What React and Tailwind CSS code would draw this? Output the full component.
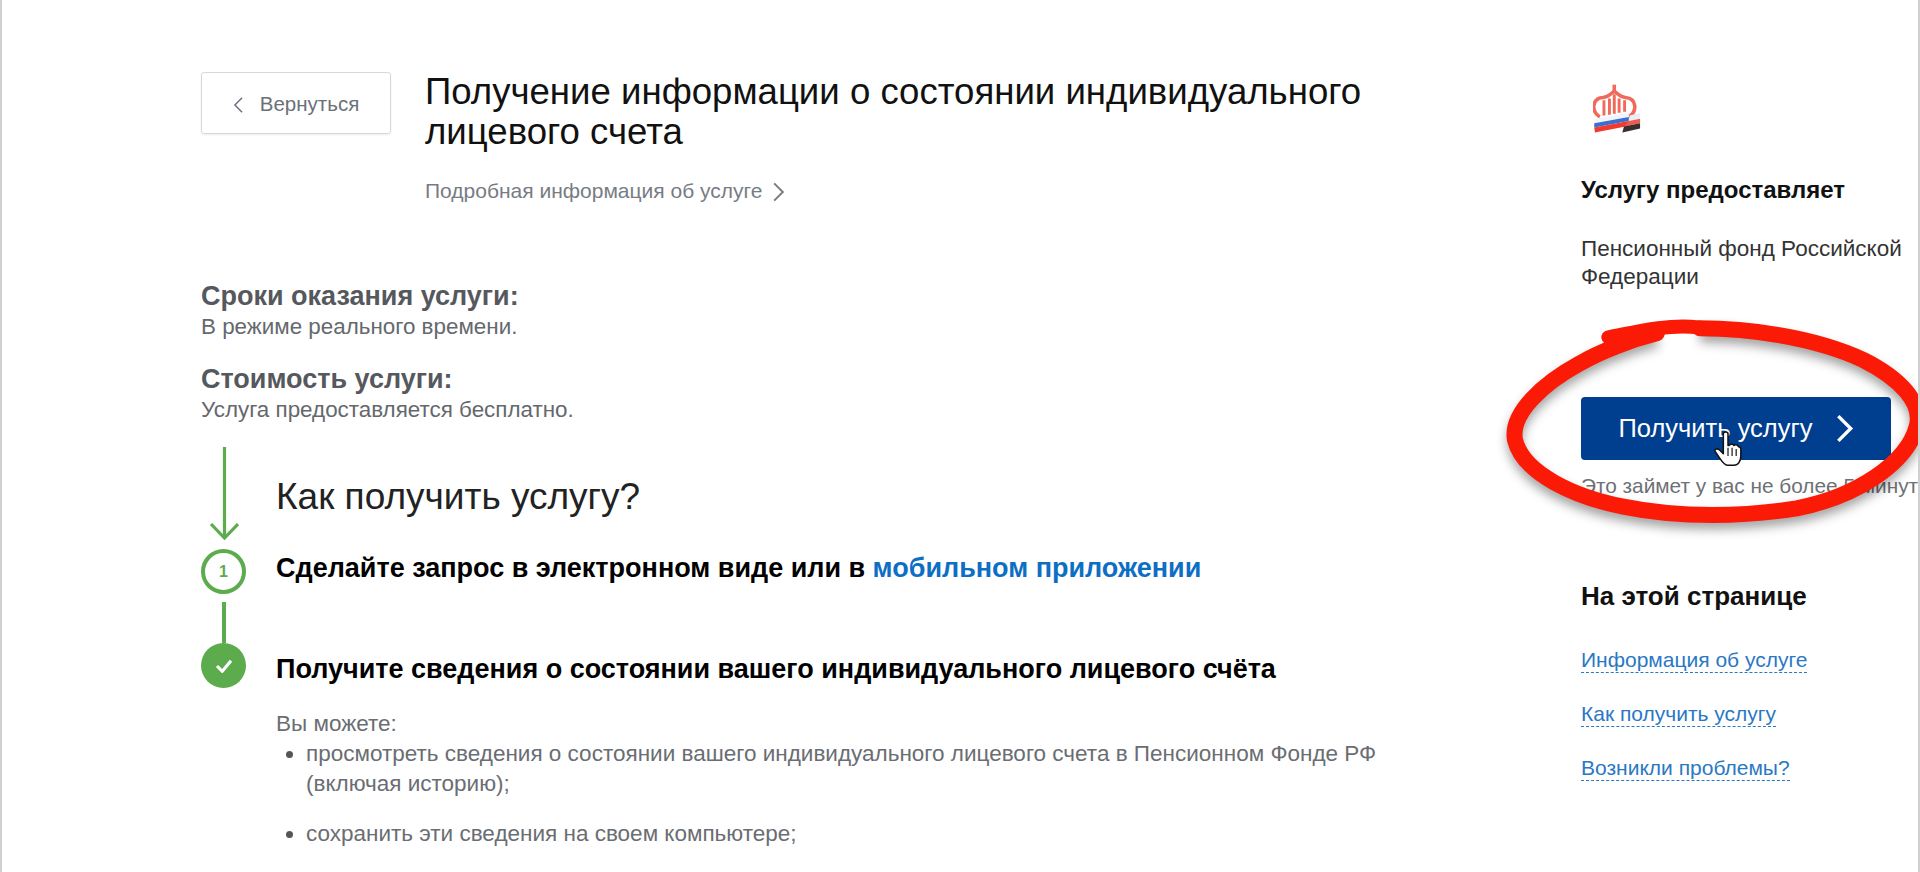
const Chevron = ({ className, dir = "right", sw = 1.8 }) => (
  <svg viewBox="0 0 12 20" className={className} fill="none" stroke="currentColor" strokeWidth={sw}>
    <path d={dir === "right" ? "M2 2l8 8-8 8" : "M10 2l-8 8 8 8"} />
  </svg>
);

const Logo = () => (
  <svg viewBox="105 10 150 155" className="w-[49px] h-[50px]">
    <path d="M170 12v25" stroke="#f0695a" strokeWidth="11" fill="none" />
    <path d="M125 112C98 95 100 55 135 52C150 50 155 45 170 32C185 45 190 50 205 52C240 55 242 95 215 112" stroke="#f0695a" strokeWidth="11" fill="none" />
    <path d="M138 60v48M155 55v50M170 42v60M185 55v44M202 60v36" stroke="#f0695a" strokeWidth="9" fill="none" />
    <polygon points="108,118 215,100 215,112 108,132" fill="#f2f4f8" />
    <polygon points="108,132 215,112 215,125 108,145" fill="#3a6fd0" />
    <polygon points="108,145 215,125 213,140 110,160" fill="#ee3a30" />
    <polygon points="218,108 250,100 250,118 215,125" fill="#e8eef5" />
    <polygon points="215,125 250,118 250,132 200,142" fill="#ee5a4e" />
    <polygon points="200,142 250,132 250,148 195,160" fill="#3a2c2c" />
  </svg>
);

const ring = "M660 85C800 85 1000 110 1150 180C1260 235 1330 310 1310 380C1280 490 1130 590 950 625C800 650 600 655 430 620C280 590 130 520 105 420C90 340 190 250 300 190C360 155 450 120 530 100";
const tail = "M385 112C450 100 560 70 655 82";

const Ellipse = () => (
  <svg viewBox="0 0 1314 720" className="absolute left-[1478px] top-[300px] w-[438px] h-[240px]" fill="none">
    <defs>
      <filter id="s" x="-15%" y="-25%" width="130%" height="150%">
        <feGaussianBlur stdDeviation="16" />
      </filter>
    </defs>
    <path d={ring} stroke="#00000060" strokeWidth="44" filter="url(#s)" transform="translate(0 20)" />
    <path d={ring} stroke="#fb1a06" strokeWidth="48" strokeLinecap="round" />
    <path d={tail} stroke="#fb1a06" strokeWidth="42" strokeLinecap="round" />
  </svg>
);

const Cursor = () => (
  <svg viewBox="0 0 24 32" className="absolute left-[1712px] top-[430px] w-[28px] h-[38px]">
    <path d="M8 3c0-2 4-2 4 0v10l1 0c1-2 4-1 4 0 1-1 3-1 4 1 1 0 2 0 2 2v6c0 4-2 8-6 8h-5c-3 0-5-3-7-6l-4-6c-1-2 2-3 4-1l3 3z" fill="#fff" stroke="#111" strokeWidth="1.3" strokeLinejoin="round" />
    <path d="M12 15v7M15.5 15v7M19 16v6" stroke="#111" strokeWidth="1" />
  </svg>
);

const Link = ({ children }) => (
  <div className="text-[21px] leading-[24px] text-[#2a78c4] border-b border-dashed border-[#2a78c4] w-fit">{children}</div>
);

export default function App() {
  return (
    <div className="relative h-[872px] w-full overflow-hidden bg-white border-x-2 border-[#d0d0d0] font-['Liberation_Sans',sans-serif] text-black">
      <div className="flex pl-[199px]">
        <div className="w-[1180px] shrink-0 pt-[72px]">
          <div className="flex">
            <div className="flex items-center justify-center gap-[16px] w-[190px] h-[62px] shrink-0 border border-[#d6d8dc] rounded-[3px] text-[#6b7078] text-[20.5px] shadow-[0_1px_2px_rgba(0,0,0,0.08)]">
              <Chevron dir="left" sw={1.6} className="w-[11px] h-[18px] mt-[3px]" />
              <span className="pt-[2px]">Вернуться</span>
            </div>
            <div className="ml-[34px]">
              <h1 className="text-[36.6px] leading-[40px] w-[980px] text-[#111]">Получение информации о состоянии индивидуального лицевого счета</h1>
              <div className="mt-[26px] flex items-center gap-[10px] text-[21px] leading-[24px] text-[#777c83]">
                <span>Подробная информация об услуге</span>
                <Chevron className="w-[13px] h-[22px] mt-[3px]" />
              </div>
            </div>
          </div>
          <div className="mt-[79px] text-[#55585d]">
            <div className="text-[27px] leading-[28px] font-bold">Сроки оказания услуги:</div>
            <div className="text-[22.4px] leading-[26px] mt-[4px] text-[#65686d]">В режиме реального времени.</div>
            <div className="text-[27px] leading-[28px] font-bold mt-[25px]">Стоимость услуги:</div>
            <div className="text-[22.4px] leading-[26px] mt-[4px] text-[#65686d]">Услуга предоставляется бесплатно.</div>
          </div>
          <div className="flex mt-[24px]">
            <div className="w-[45px] shrink-0 flex flex-col items-center">
              <svg viewBox="0 0 30 93" className="w-[30px] h-[93px]" fill="none" stroke="#5cab4d" strokeWidth="3.2">
                <path d="M15.5 0v91M2 77l13.5 14L29 77" />
              </svg>
              <div className="mt-[9px] w-[45px] h-[45px] rounded-full border-[4px] border-[#5cab4d] flex items-center justify-center text-[#5cab4d] text-[16px] font-bold">1</div>
              <div className="mt-[8px] w-[4px] h-[41px] bg-[#5cab4d]" />
              <div className="w-[45px] h-[45px] rounded-full bg-[#5cab4d] flex items-center justify-center">
                <svg viewBox="0 0 20 16" className="w-[18px] h-[14px]" fill="none" stroke="#fff" strokeWidth="3.6">
                  <path d="M2 8l6 6L18 2" />
                </svg>
              </div>
            </div>
            <div className="ml-[30px] w-[1100px]">
              <h2 className="text-[37px] leading-[44px] mt-[28px] text-[#222]">Как получить услугу?</h2>
              <div className="text-[27px] leading-[32px] font-bold mt-[33px]">
                Сделайте запрос в электронном виде или в <span className="text-[#0d6fc4]">мобильном приложении</span>
              </div>
              <div className="text-[27px] leading-[32px] font-bold mt-[69px]">Получите сведения о состоянии вашего индивидуального лицевого счёта</div>
              <div className="mt-[24px] text-[22.5px] leading-[30px] text-[#6a6d72]">
                <div>Вы можете:</div>
                <ul className="list-disc pl-[30px] marker:text-[#555]">
                  <li className="w-[1080px]">просмотреть сведения о состоянии вашего индивидуального лицевого счета в Пенсионном Фонде РФ (включая историю);</li>
                  <li className="mt-[20px]">сохранить эти сведения на своем компьютере;</li>
                </ul>
              </div>
            </div>
          </div>
        </div>
        <div className="ml-[200px] w-[340px] shrink-0 pt-[84px]">
          <div className="ml-[12px]"><Logo /></div>
          <div className="mt-[42px] text-[24px] leading-[28px] font-bold text-[#111]">Услугу предоставляет</div>
          <div className="mt-[31px] text-[22.5px] leading-[28px] text-[#333] w-[330px]">Пенсионный фонд Российской Федерации</div>
          <div className="mt-[106px] w-[310px] h-[63px] bg-[#003f8f] rounded-[4px] text-white text-[25.5px] flex items-center justify-center gap-[22px]">
            <span>Получить услугу</span>
            <Chevron sw={2.2} className="w-[19px] h-[31px]" />
          </div>
          <div className="mt-[14px] text-[20.8px] leading-[24px] text-[#6d7075] whitespace-nowrap">Это займет у вас не более 5 минут</div>
          <div className="mt-[82px] text-[26px] leading-[32px] font-bold text-[#111]">На этой странице</div>
          <div className="mt-[36px] flex flex-col gap-[29px]">
            <Link>Информация об услуге</Link>
            <Link>Как получить услугу</Link>
            <Link>Возникли проблемы?</Link>
          </div>
        </div>
      </div>
      <Ellipse />
      <Cursor />
    </div>
  );
}
